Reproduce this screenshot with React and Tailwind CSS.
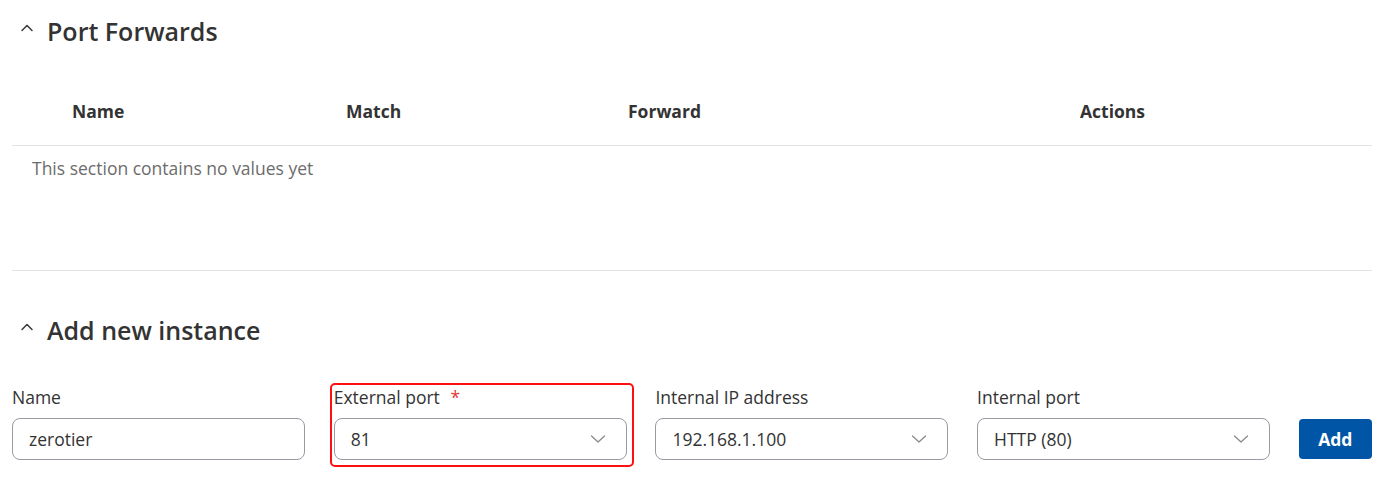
import React from "react";

function Chevron() {
  return (
    <svg width="14" height="14" viewBox="0 0 14 14" className="shrink-0">
      <path d="M2 9.5 L7 4.5 L12 9.5" fill="none" stroke="#3a3a3a" strokeWidth="1.5" strokeLinecap="round" strokeLinejoin="round" />
    </svg>
  );
}

function SelectChevron() {
  return (
    <svg width="16" height="10" viewBox="0 0 16 10">
      <path d="M1.5 2 L8 8 L14.5 2" fill="none" stroke="#8a8a8a" strokeWidth="1.3" strokeLinecap="round" strokeLinejoin="round" />
    </svg>
  );
}

function Select({ value }) {
  return (
    <div className="h-[42px] w-full rounded-[8px] border border-[#9a9aa2] bg-white flex items-center justify-between pl-[16px] pr-[20px] text-[17.5px] text-[#333]">
      <span>{value}</span>
      <SelectChevron />
    </div>
  );
}

export default function App() {
  return (
    <div className="w-[1383px] h-[478px] bg-white overflow-hidden pl-[12px] pr-[11px] text-[#333]" style={{ fontFamily: '"Open Sans", "Liberation Sans", sans-serif' }}>
      {/* Port Forwards heading */}
      <div className="h-[62px] flex items-center gap-[13px] pl-[8px]">
        <div className="-mt-[6px]"><Chevron /></div>
        <h2 className="text-[25px] font-semibold text-[#333] leading-none">Port Forwards</h2>
      </div>

      {/* Table */}
      <div className="mt-[16px]">
        <div className="h-[68px] flex items-center border-b border-[#e2e2e4] text-[17.5px] font-bold text-[#333]">
          <div className="w-[334px] pl-[60px]">Name</div>
          <div className="w-[282px]">Match</div>
          <div className="w-[452px]">Forward</div>
          <div className="flex-1">Actions</div>
        </div>
        <div className="h-[44px] flex items-center pl-[20px] text-[17.5px] text-[#6c6c6c]">
          This section contains no values yet
        </div>
      </div>

      <div className="mt-[80px] border-t border-[#e2e2e4]" />

      {/* Add new instance heading */}
      <div className="h-[58px] mt-[30px] flex items-center gap-[13px] pl-[8px]">
        <div className="-mt-[6px]"><Chevron /></div>
        <h2 className="text-[25px] font-semibold text-[#333] leading-none">Add new instance</h2>
      </div>

      {/* Form row */}
      <div className="mt-[24px] flex items-end gap-[28.7px]">
        <div className="w-[293px] flex flex-col">
          <label className="text-[17.5px] leading-[24px] text-[#333] mb-[9px] mt-[2px]">Name</label>
          <div className="h-[42px] w-full rounded-[8px] border border-[#9a9aa2] bg-white flex items-center pl-[16px] text-[17.5px] text-[#333]">
            zerotier
          </div>
        </div>
        <div className="w-[293px] flex flex-col relative">
          <div className="absolute left-[-4px] right-[-7px] top-[0px] bottom-[-7px] border-2 border-[#ff1010] rounded-[5px] pointer-events-none" />
          <label className="text-[17.5px] leading-[24px] text-[#333] mb-[9px] mt-[2px]">
            External port <span className="text-[#e53935] ml-[6px]">*</span>
          </label>
          <Select value="81" />
        </div>
        <div className="w-[293px] flex flex-col">
          <label className="text-[17.5px] leading-[24px] text-[#333] mb-[9px] mt-[2px]">Internal IP address</label>
          <Select value="192.168.1.100" />
        </div>
        <div className="w-[293px] flex flex-col">
          <label className="text-[17.5px] leading-[24px] text-[#333] mb-[9px] mt-[2px]">Internal port</label>
          <Select value="HTTP (80)" />
        </div>
        <button className="mb-[1px] h-[40px] w-[73px] rounded-[4px] bg-[#0055a6] text-white text-[17.5px] font-bold">
          Add
        </button>
      </div>
    </div>
  );
}
